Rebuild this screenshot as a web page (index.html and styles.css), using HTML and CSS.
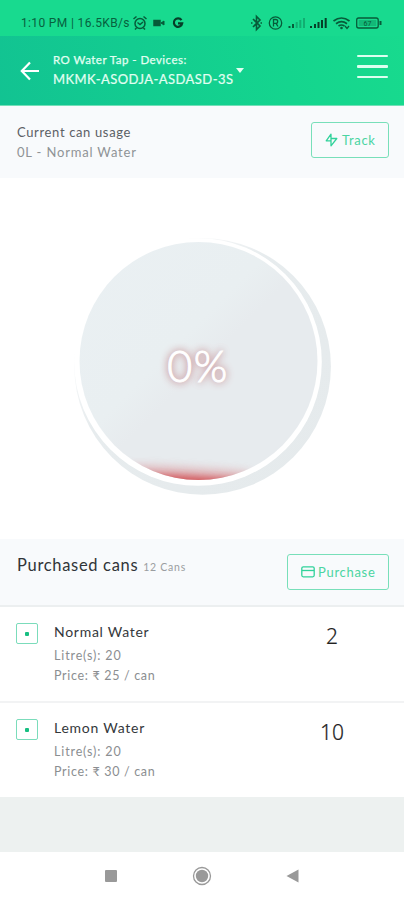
FILE: index.html
```html
<!DOCTYPE html>
<html lang="en">
<head>
<meta charset="utf-8">
<title>RO Water Tap</title>
<link rel="stylesheet" href="styles.css">
</head>
<body>
<div class="status">
  <span class="clock">1:10 PM | 16.5KB/s</span>
  <svg class="status-left" width="54" height="16" viewBox="0 0 54 16" fill="none" stroke="#075b39" stroke-width="1.5">
    <circle cx="8" cy="8.5" r="5"/><path d="M5.500 7.500 8 9.500l3-2.500M1.500 4 4.500 1.500M14.500 4l-3-2.500M4.500 13 3 14.500M11.500 13l1.500 1.500"/>
    <rect x="22" y="5.500" width="6" height="5" fill="#075b39"/><path d="m29 8 3-2v4z" fill="#075b39" stroke-width="1"/>
    <path d="M49.500 5.200A4.200 4.200 0 1 0 50.200 8.300H46" stroke="#063e28" stroke-width="2.200"/>
  </svg>
  <svg class="status-right" width="136" height="18" viewBox="0 0 136 18" fill="none" stroke="#075b39" stroke-width="1.300">
    <path d="m5 5 7 7-3.500 3.500v-13L12 6l-7 7M3 9h1.500M12.500 9H14" stroke-width="1.600"/>
    <circle cx="27.500" cy="9" r="6.200"/><path d="M25.500 12.500v-7h2.300a1.900 1.900 0 0 1 0 3.800h-2.300m2.500 0 2 3.200"/>
    <path d="M41.500 14v-2M45 14v-4" stroke-width="2"/><path d="M48.700 14V8M52.300 14V6M56 14V4" stroke-width="2" opacity=".35"/>
    <path d="M63 14v-2M67 14v-4M70.500 14V8M74 14V6M77.700 14V4" stroke-width="2" stroke="#063e28"/>
    <path d="M85.500 7q8-6 16 0M88 9.700q5.500-4 11 0M90.500 12q3-2 6 0" stroke-width="1.700"/><circle cx="93.500" cy="14" r="1.300" fill="#075b39" stroke="none"/><path d="m97 12 2 2.500 2-2.500"/>
    <rect x="108.700" y="4" width="21.500" height="10" rx="2"/><rect x="110.700" y="6" width="17.500" height="6" fill="#0d9660" stroke="none" opacity=".5"/><path d="M132.500 7v4" stroke-width="2"/>
    <text x="119.500" y="11.800" class="battery-text">67</text>
  </svg>
</div>
<header class="appbar">
  <svg class="back" width="20" height="20" viewBox="0 0 20 20" fill="none" stroke="#fff" stroke-width="2.200"><path d="M19 10H2M10 1.500 1.800 10l8.200 8.500"/></svg>
  <div class="device">
    <div class="device-label">RO Water Tap - Devices:</div>
    <div class="device-name">MKMK-ASODJA-ASDASD-3S<i class="caret"></i></div>
  </div>
  <div class="menu"><i></i><i></i><i></i></div>
</header>
<section class="usage">
  <div>
    <div class="usage-title">Current can usage</div>
    <div class="usage-sub">0L - Normal Water</div>
  </div>
  <div class="button track">
    <svg width="13" height="14" viewBox="0 0 13 14" fill="none" stroke="#30d29a" stroke-width="1.300" stroke-linejoin="round"><path d="M6 1.200 1.200 7.800H6v5L11.800 5.500H6zM6 5.500v2.300"/></svg>
    <span>Track</span>
  </div>
</section>
<main class="gauge">
  <svg width="270" height="270" viewBox="68 232 270 270">
    <defs>
      <linearGradient id="disc" x1="0" y1="0" x2="1" y2="1"><stop offset="0" stop-color="#eaf0f3"/><stop offset=".42" stop-color="#e9eff1"/><stop offset=".52" stop-color="#e7ebee"/><stop offset="1" stop-color="#e7ebee"/></linearGradient>
      <linearGradient id="rim" x1="0" y1="0" x2="1" y2="1"><stop offset=".15" stop-color="#fff"/><stop offset=".4" stop-color="#e7ecee"/><stop offset="1" stop-color="#e5eaec"/></linearGradient>
      <clipPath id="bowl"><circle cx="198.500" cy="361" r="119"/></clipPath>
      <filter id="haze" x="-20%" y="-80%" width="140%" height="260%"><feGaussianBlur stdDeviation="5"/></filter>
      <filter id="soft" x="-20%" y="-80%" width="140%" height="260%"><feGaussianBlur stdDeviation="3"/></filter>
    </defs>
    <circle cx="202.600" cy="366.500" r="128.300" fill="url(#rim)"/>
    <circle cx="198" cy="362" r="123.800" fill="#fff"/>
    <circle cx="198.500" cy="361" r="119" fill="url(#disc)"/>
    <g clip-path="url(#bowl)">
      <path d="M130 466Q180 467 250 473L250 500H130Z" fill="#d98c90" opacity=".65" filter="url(#haze)"/>
      <path d="M145 474Q190 476 235 479V500H145Z" fill="#d04449" opacity=".8" filter="url(#soft)"/>
    </g>
  </svg>
  <div class="percent">0%</div>
</main>
<section class="purchased">
  <div class="purchased-title">Purchased cans <small>12 Cans</small></div>
  <div class="button purchase">
    <svg width="14" height="12" viewBox="0 0 14 12" fill="none" stroke="#30d29a" stroke-width="1.300"><rect x=".8" y=".8" width="12.400" height="10" rx="1.500"/><path d="M1 4.500h12"/></svg>
    <span>Purchase</span>
  </div>
</section>
<section class="item">
  <i class="mark"></i>
  <div class="info"><div class="name">Normal Water</div><div class="meta litres">Litre(s): 20</div><div class="meta">Price: ₹ 25 / can</div></div>
  <div class="count">2</div>
</section>
<section class="item last">
  <i class="mark"></i>
  <div class="info"><div class="name lemon">Lemon Water</div><div class="meta litres">Litre(s): 20</div><div class="meta">Price: ₹ 30 / can</div></div>
  <div class="count">10</div>
</section>
<div class="spacer"></div>
<nav class="nav">
  <svg width="20" height="20" viewBox="0 0 20 20"><rect x="4" y="4" width="12" height="12" rx="1" fill="#999"/></svg>
  <svg width="20" height="20" viewBox="0 0 20 20"><circle cx="10" cy="10" r="8.500" fill="none" stroke="#999" stroke-width="1.300"/><circle cx="10" cy="10" r="6.200" fill="#999"/></svg>
  <svg width="20" height="20" viewBox="0 0 20 20"><path d="M3.500 10 15.500 3.500v13z" fill="#999"/></svg>
</nav>
</body>
</html>
```
FILE: styles.css
```css
* { box-sizing: border-box; }
body {
  margin: 0;
  width: 404px;
  height: 900px;
  overflow: hidden;
  display: flex;
  flex-direction: column;
  background: #fff;
  font-family: Lato, "Noto Sans", "DejaVu Sans", sans-serif;
  white-space: nowrap;
}
svg { display: block; flex: none; }
.status {
  height: 36px;
  flex: none;
  display: flex;
  align-items: center;
  padding: 10px 20px 0 21px;
  background: #18da8f;
  color: #07613e;
}
.clock { width: 111px; font: 12px/16px Roboto, sans-serif; letter-spacing: .35px; }
.status-right { margin-left: auto; }
.battery-text { font: 7px Roboto, sans-serif; fill: #075b39; stroke: none; text-anchor: middle; }
.appbar {
  height: 69px;
  flex: none;
  display: flex;
  padding: 0 16px 0 20px;
  background: linear-gradient(75deg, #12c392, #14d58e 70%, #18da8e);
  color: #e2fff2;
}
.back { margin-top: 25px; }
.device { margin: 15px 0 0 13px; }
.device-label { font-size: 11.500px; line-height: 18px; letter-spacing: .46px; -webkit-text-stroke: .25px; }
.device-name { position: relative; width: max-content; font-size: 13px; line-height: 20px; letter-spacing: .44px; -webkit-text-stroke: .2px; }
.caret {
  position: absolute;
  left: calc(100% + 3px);
  top: -1px;
  border: 4px solid transparent;
  border-top: 5px solid #e2fff2;
  border-bottom: 0;
}
.menu { margin: 19px 0 0 auto; width: 31px; display: flex; flex-direction: column; gap: 8px; }
.menu i { height: 2.300px; border-radius: 1px; background: #dcfff0; }
.usage {
  height: 73px;
  flex: none;
  display: flex;
  justify-content: space-between;
  padding: 16px 15px 0 17px;
  border-top: 1px solid #74dfb8;
  background: #f8fafc;
}
.usage-title { font-size: 13px; line-height: 20px; color: #5b6065; letter-spacing: .64px; }
.usage-sub { font-size: 13px; line-height: 20px; color: #8f9396; letter-spacing: .82px; }
.button {
  height: 36px;
  display: flex;
  align-items: center;
  border: 1.500px solid #78dfb9;
  border-radius: 3px;
  color: #4bd5a2;
  font-size: 13px;
  letter-spacing: .7px;
}
.track { width: 78px; padding-left: 13px; gap: 4px; }
.gauge {
  height: 361px;
  flex: none;
  position: relative;
  padding: 54px 0 0 68px;
}
.percent {
  position: absolute;
  left: 97px;
  top: 161px;
  width: 202px;
  text-align: center;
  font: 300 43px/54px Lato, sans-serif;
  letter-spacing: 1.500px;
  color: #fff;
  -webkit-text-stroke: 1px #fff;
  text-shadow: 0 0 7px #b66f74, 0 0 10px #d0999d;
}
.purchased {
  height: 68px;
  flex: none;
  display: flex;
  justify-content: space-between;
  padding: 15px 15px 0 17px;
  border-bottom: 2px solid #eceff0;
  background: #f8fafc;
}
.purchased-title { font-size: 16.500px; line-height: 22px; color: #303438; letter-spacing: .68px; }
.purchased-title small { font-size: 10.500px; letter-spacing: .75px; color: #9a9da0; }
.purchase { width: 102px; padding-left: 13px; gap: 3px; }
.item {
  height: 96px;
  flex: none;
  display: flex;
  padding: 16px 0 0 16px;
  border-bottom: 2px solid #f2f3f4;
}
.item.last { height: 94px; border: 0; }
.mark {
  width: 22px;
  height: 21px;
  flex: none;
  display: grid;
  place-items: center;
  border: 1.500px solid #7bdcbb;
  border-radius: 2px;
}
.mark::after { content: ""; width: 4px; height: 4px; border-radius: 1px; background: #18bf82; }
.info { width: 234px; padding-left: 16px; }
.name { font-size: 14px; line-height: 20px; margin-top: -1px; margin-bottom: 4px; color: #34383b; letter-spacing: .72px; }
.lemon { letter-spacing: .75px; }
.meta { font-size: 12.500px; line-height: 19.700px; color: #8b8e91; letter-spacing: .68px; }
.litres { letter-spacing: .86px; }
.count { width: 120px; text-align: center; font: 300 21px/27px "Noto Sans", sans-serif; color: #222; -webkit-text-stroke: .2px; }
.spacer { height: 55px; flex: none; background: #edf1f0; }
.nav { flex: 1; display: flex; justify-content: space-between; padding: 14px 101px 0; }
```
